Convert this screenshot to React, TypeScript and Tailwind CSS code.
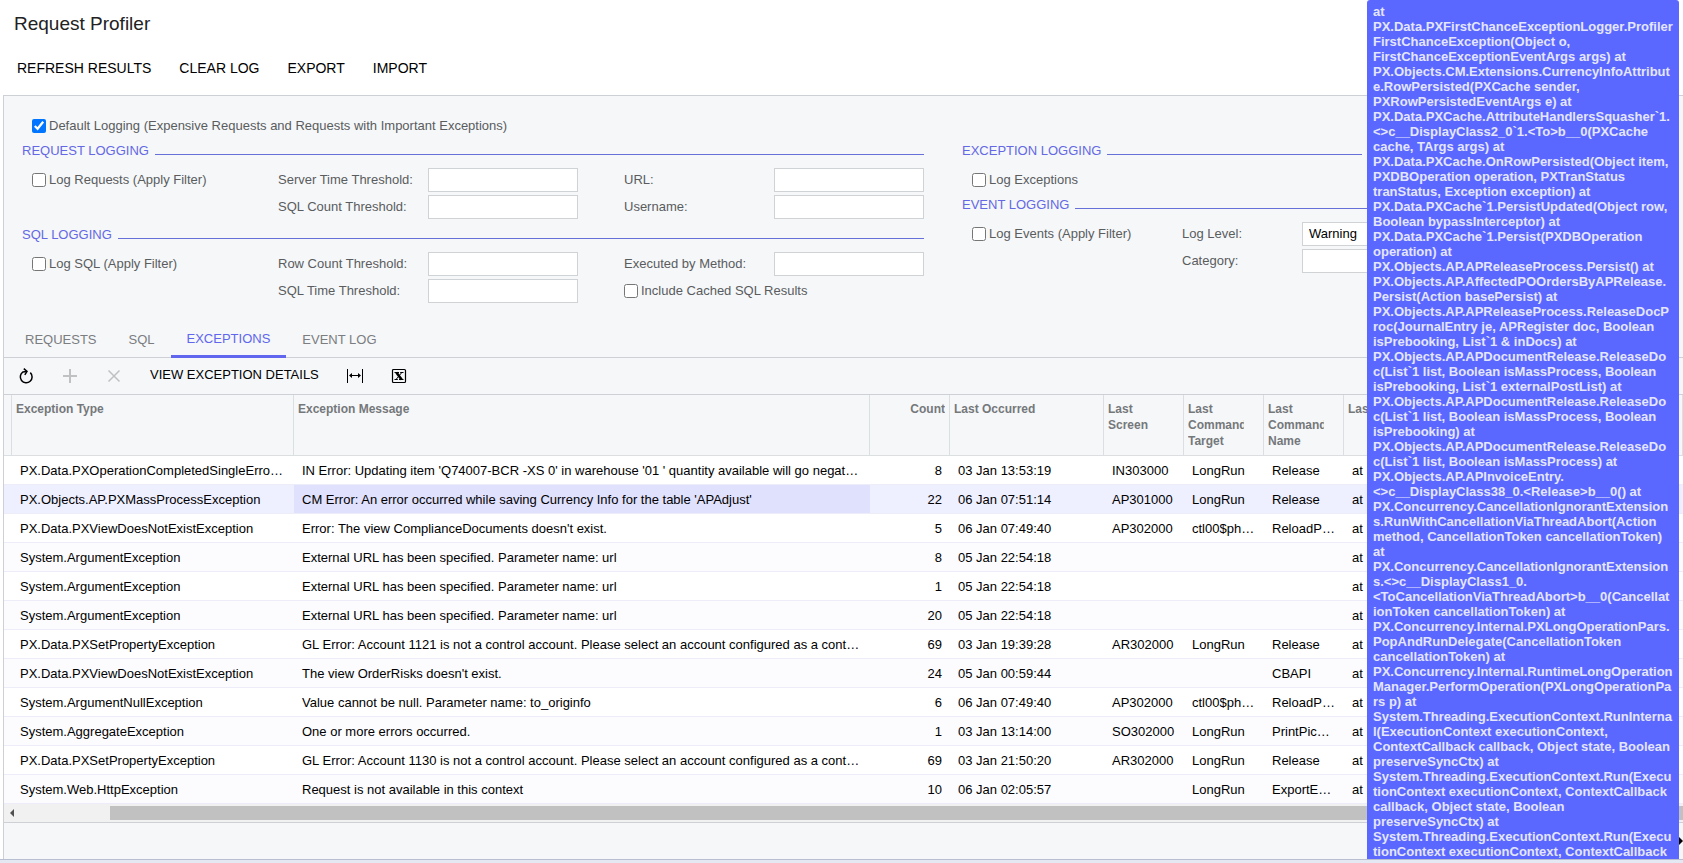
import { useState } from "react";
import type { ReactNode } from "react";

interface ExceptionRow {
  type: string;
  message: string;
  count: number;
  occurred: string;
  screen: string;
  target: string;
  command: string;
}

const rows: ExceptionRow[] = [
  { type: "PX.Data.PXOperationCompletedSingleErrorException", message: "IN Error: Updating item 'Q74007-BCR -XS 0' in warehouse '01 ' quantity available will go negative.", count: 8, occurred: "03 Jan 13:53:19", screen: "IN303000", target: "LongRun", command: "Release" },
  { type: "PX.Objects.AP.PXMassProcessException", message: "CM Error: An error occurred while saving Currency Info for the table 'APAdjust'", count: 22, occurred: "06 Jan 07:51:14", screen: "AP301000", target: "LongRun", command: "Release" },
  { type: "PX.Data.PXViewDoesNotExistException", message: "Error: The view ComplianceDocuments doesn't exist.", count: 5, occurred: "06 Jan 07:49:40", screen: "AP302000", target: "ctl00$phDS", command: "ReloadPage" },
  { type: "System.ArgumentException", message: "External URL has been specified. Parameter name: url", count: 8, occurred: "05 Jan 22:54:18", screen: "", target: "", command: "" },
  { type: "System.ArgumentException", message: "External URL has been specified. Parameter name: url", count: 1, occurred: "05 Jan 22:54:18", screen: "", target: "", command: "" },
  { type: "System.ArgumentException", message: "External URL has been specified. Parameter name: url", count: 20, occurred: "05 Jan 22:54:18", screen: "", target: "", command: "" },
  { type: "PX.Data.PXSetPropertyException", message: "GL Error: Account 1121 is not a control account. Please select an account configured as a control account.", count: 69, occurred: "03 Jan 19:39:28", screen: "AR302000", target: "LongRun", command: "Release" },
  { type: "PX.Data.PXViewDoesNotExistException", message: "The view OrderRisks doesn't exist.", count: 24, occurred: "05 Jan 00:59:44", screen: "", target: "", command: "CBAPI" },
  { type: "System.ArgumentNullException", message: "Value cannot be null. Parameter name: to_originfo", count: 6, occurred: "06 Jan 07:49:40", screen: "AP302000", target: "ctl00$phDS", command: "ReloadPage" },
  { type: "System.AggregateException", message: "One or more errors occurred.", count: 1, occurred: "03 Jan 13:14:00", screen: "SO302000", target: "LongRun", command: "PrintPickList" },
  { type: "PX.Data.PXSetPropertyException", message: "GL Error: Account 1130 is not a control account. Please select an account configured as a control account.", count: 69, occurred: "03 Jan 21:50:20", screen: "AR302000", target: "LongRun", command: "Release" },
  { type: "System.Web.HttpException", message: "Request is not available in this context", count: 10, occurred: "06 Jan 02:05:57", screen: "", target: "LongRun", command: "ExportExcel" },
];

// Already wrapped to the tooltip width
const stackTrace = [
  "at",
  "PX.Data.PXFirstChanceExceptionLogger.Profiler",
  "FirstChanceException(Object o,",
  "FirstChanceExceptionEventArgs args) at",
  "PX.Objects.CM.Extensions.CurrencyInfoAttribut",
  "e.RowPersisted(PXCache sender,",
  "PXRowPersistedEventArgs e) at",
  "PX.Data.PXCache.AttributeHandlersSquasher`1.",
  "<>c__DisplayClass2_0`1.<To>b__0(PXCache",
  "cache, TArgs args) at",
  "PX.Data.PXCache.OnRowPersisted(Object item,",
  "PXDBOperation operation, PXTranStatus",
  "tranStatus, Exception exception) at",
  "PX.Data.PXCache`1.PersistUpdated(Object row,",
  "Boolean bypassInterceptor) at",
  "PX.Data.PXCache`1.Persist(PXDBOperation",
  "operation) at",
  "PX.Objects.AP.APReleaseProcess.Persist() at",
  "PX.Objects.AP.AffectedPOOrdersByAPRelease.",
  "Persist(Action basePersist) at",
  "PX.Objects.AP.APReleaseProcess.ReleaseDocP",
  "roc(JournalEntry je, APRegister doc, Boolean",
  "isPrebooking, List`1 & inDocs) at",
  "PX.Objects.AP.APDocumentRelease.ReleaseDo",
  "c(List`1 list, Boolean isMassProcess, Boolean",
  "isPrebooking, List`1 externalPostList) at",
  "PX.Objects.AP.APDocumentRelease.ReleaseDo",
  "c(List`1 list, Boolean isMassProcess, Boolean",
  "isPrebooking) at",
  "PX.Objects.AP.APDocumentRelease.ReleaseDo",
  "c(List`1 list, Boolean isMassProcess) at",
  "PX.Objects.AP.APInvoiceEntry.",
  "<>c__DisplayClass38_0.<Release>b__0() at",
  "PX.Concurrency.CancellationIgnorantExtension",
  "s.RunWithCancellationViaThreadAbort(Action",
  "method, CancellationToken cancellationToken)",
  "at",
  "PX.Concurrency.CancellationIgnorantExtension",
  "s.<>c__DisplayClass1_0.",
  "<ToCancellationViaThreadAbort>b__0(Cancellat",
  "ionToken cancellationToken) at",
  "PX.Concurrency.Internal.PXLongOperationPars.",
  "PopAndRunDelegate(CancellationToken",
  "cancellationToken) at",
  "PX.Concurrency.Internal.RuntimeLongOperation",
  "Manager.PerformOperation(PXLongOperationPa",
  "rs p) at",
  "System.Threading.ExecutionContext.RunInterna",
  "l(ExecutionContext executionContext,",
  "ContextCallback callback, Object state, Boolean",
  "preserveSyncCtx) at",
  "System.Threading.ExecutionContext.Run(Execu",
  "tionContext executionContext, ContextCallback",
  "callback, Object state, Boolean",
  "preserveSyncCtx) at",
  "System.Threading.ExecutionContext.Run(Execu",
  "tionContext executionContext, ContextCallback",
];

const Legend = ({ children }: { children: ReactNode }) => (
  <div className="flex h-[27px] items-center gap-[6px] text-[#6468e4]">
    <h2 className="pb-[2px]">{children}</h2>
    <span className="mt-[6px] h-px flex-1 bg-[#6670d8]" />
  </div>
);

const CheckField = ({ label, defaultChecked = false }: { label: string; defaultChecked?: boolean }) => (
  <label className="flex h-6 items-center gap-[3px] whitespace-nowrap">
    <input type="checkbox" defaultChecked={defaultChecked} className="size-[14px] accent-[#0075ff]" />
    {label}
  </label>
);

const TextField = ({ label, id, labelClass }: { label: string; id: string; labelClass: string }) => (
  <div className="flex h-6 items-center">
    <label htmlFor={id} className={`shrink-0 ${labelClass}`}>{label}</label>
    <input id={id} type="text" className="h-6 w-[150px] border border-[#d0d3d6] bg-white px-[7px] text-black" />
  </div>
);

const HeaderCell = ({ children, right = false }: { children?: ReactNode; right?: boolean }) => (
  <th className={`h-[61px] overflow-hidden border-r border-b border-[#dcdfe2] pt-[6px] pl-1 align-top leading-4 font-bold ${right ? "pr-1 text-right" : "pr-[19px] text-left"}`}>
    <div className="overflow-hidden">{children}</div>
  </th>
);

const Cell = ({ children, className = "pr-2" }: { children?: ReactNode; className?: string }) => (
  <td className={`h-[29px] truncate border-b border-[#ededf9] pt-[2px] pl-2 ${className}`}>{children}</td>
);

const tabs = ["REQUESTS", "SQL", "EXCEPTIONS", "EVENT LOG"];

const App = () => {
  const [activeTab, setActiveTab] = useState("EXCEPTIONS");
  const [selected, setSelected] = useState(1);

  return (
    <div className="relative flex min-h-screen flex-col overflow-hidden bg-white font-['Liberation_Sans',Arial,sans-serif] text-[13px] leading-4 text-[#5a5c5e]">
      <header className="h-[95px] pt-3">
        <h1 className="px-[14px] text-[19px] leading-6 text-[#222]">Request Profiler</h1>
        <nav className="mt-[22px] flex px-[3px] text-[14px] leading-5 text-black">
          {["REFRESH RESULTS", "CLEAR LOG", "EXPORT", "IMPORT"].map((label) => (
            <button key={label} className="px-[14px]">{label}</button>
          ))}
        </nav>
      </header>

      <main className="ml-[3px] flex flex-1 flex-col border-t border-l border-[#cdd0d4] bg-[#f5f7f9]">
        {/* Logging settings */}
        <form className="px-[18px] pt-[18px]">
          <div className="pl-[10px]">
            <CheckField label="Default Logging (Expensive Requests and Requests with Important Exceptions)" defaultChecked />
          </div>
          <div className="flex gap-[38px]">
            <div className="w-[902px] shrink-0">
              <Legend>REQUEST LOGGING</Legend>
              <div className="mt-[3px] mb-[3px] flex justify-between pl-[10px]">
                <div className="w-[246px]">
                  <CheckField label="Log Requests (Apply Filter)" />
                </div>
                <div className="flex flex-1 flex-col gap-[3px]">
                  <TextField label="Server Time Threshold:" id="server-time" labelClass="w-[150px]" />
                  <TextField label="SQL Count Threshold:" id="sql-count" labelClass="w-[150px]" />
                </div>
                <div className="flex flex-col gap-[3px]">
                  <TextField label="URL:" id="url" labelClass="w-[150px]" />
                  <TextField label="Username:" id="username" labelClass="w-[150px]" />
                </div>
              </div>
              <Legend>SQL LOGGING</Legend>
              <div className="mt-[3px] flex justify-between pl-[10px]">
                <div className="w-[246px]">
                  <CheckField label="Log SQL (Apply Filter)" />
                </div>
                <div className="flex flex-1 flex-col gap-[3px]">
                  <TextField label="Row Count Threshold:" id="row-count" labelClass="w-[150px]" />
                  <TextField label="SQL Time Threshold:" id="sql-time" labelClass="w-[150px]" />
                </div>
                <div className="flex flex-col gap-[3px]">
                  <TextField label="Executed by Method:" id="method" labelClass="w-[150px]" />
                  <CheckField label="Include Cached SQL Results" />
                </div>
              </div>
            </div>

            <div className="w-[490px] shrink-0">
              <div className="w-[400px]">
                <Legend>EXCEPTION LOGGING</Legend>
              </div>
              <div className="mt-[3px] pl-[10px]">
                <CheckField label="Log Exceptions" />
              </div>
              <Legend>EVENT LOGGING</Legend>
              <div className="mt-[3px] flex justify-between pl-[10px]">
                <CheckField label="Log Events (Apply Filter)" />
                <div className="flex flex-col gap-[3px]">
                  <div className="flex h-6 items-center">
                    <label htmlFor="log-level" className="w-[120px]">Log Level:</label>
                    <select id="log-level" className="h-6 w-[150px] appearance-none border border-[#d0d3d6] bg-white px-[6px] text-black">
                      <option>Warning</option>
                    </select>
                  </div>
                  <TextField label="Category:" id="category" labelClass="w-[120px]" />
                </div>
              </div>
            </div>
          </div>
        </form>

        {/* Tabs */}
        <div className="mt-[17px] flex h-[38px] border-b border-[#cdd0d4] pl-[5px]">
          {tabs.map((tab) => (
            <button
              key={tab}
              onClick={() => setActiveTab(tab)}
              className={`h-[38px] px-4 pt-[2px] ${
                tab === activeTab ? "border-b-[3px] border-[#6066ee] text-[#6066ee]" : "text-[#7b7d80]"
              }`}
            >
              {tab}
            </button>
          ))}
        </div>

        {/* Grid toolbar */}
        <div className="flex h-[37px] items-center border-b border-[#cdd0d4] pl-[14px] text-black">
          <button aria-label="Refresh">
            <svg width="16" height="16" viewBox="0 0 16 16" fill="none" stroke="currentColor" strokeWidth="1.5">
              <path d="M12.3 4.6A5.9 5.9 0 1 1 5 3.9L8.4 3.5" />
              <path d="M5.8 0.6L9 3.4L6.8 6.8" />
            </svg>
          </button>
          <button aria-label="Add" className="ml-7 text-[#bfc1c3]">
            <svg width="16" height="16" viewBox="0 0 16 16" fill="none" stroke="currentColor" strokeWidth="2">
              <path d="M8 1V15M1 8H15" />
            </svg>
          </button>
          <button aria-label="Delete" className="ml-7 text-[#bfc1c3]">
            <svg width="16" height="16" viewBox="0 0 16 16" fill="none" stroke="currentColor" strokeWidth="1.5">
              <path d="M2.5 2.5L13.5 13.5M13.5 2.5L2.5 13.5" />
            </svg>
          </button>
          <button className="ml-7 pb-[2px]">VIEW EXCEPTION DETAILS</button>
          <button aria-label="Fit to screen" className="ml-7">
            <svg width="16" height="16" viewBox="0 0 16 16" fill="none" stroke="currentColor">
              <path d="M0.5 1V15M15.5 1V15M3 7.5H13" />
              <path d="M2 7.5L5 5V10ZM14 7.5L11 5V10Z" fill="currentColor" stroke="none" />
            </svg>
          </button>
          <button aria-label="Export to Excel" className="ml-7">
            <svg width="16" height="16" viewBox="0 0 16 16" fill="none" stroke="currentColor">
              <rect x="1.5" y="1.5" width="13" height="13" rx="1" strokeWidth="1.2" />
              <path d="M5.4 4.5L10.6 11.5" strokeWidth="2.6" />
              <path d="M10.8 4.5L5 11.5M3.5 4.5H8M9.2 4.5H12.5M3.5 11.5H6.8M8 11.5H12.5" />
            </svg>
          </button>
        </div>

        {/* Exceptions grid */}
        <table className="w-full table-fixed border-separate border-spacing-0">
          <colgroup>
            <col className="w-[8px]" />
            <col className="w-[282px]" />
            <col className="w-[576px]" />
            <col className="w-[80px]" />
            <col className="w-[154px]" />
            <col className="w-[80px]" />
            <col className="w-[80px]" />
            <col className="w-[80px]" />
            <col />
          </colgroup>
          <thead className="text-[12px] text-[#75787b]">
            <tr>
              <th className="border-r border-b border-[#dcdfe2]" />
              <HeaderCell>Exception Type</HeaderCell>
              <HeaderCell>Exception Message</HeaderCell>
              <HeaderCell right>Count</HeaderCell>
              <HeaderCell>Last Occurred</HeaderCell>
              <HeaderCell>Last Screen</HeaderCell>
              <HeaderCell>Last Command Target</HeaderCell>
              <HeaderCell>Last Command Name</HeaderCell>
              <HeaderCell>Last Stack Trace</HeaderCell>
            </tr>
          </thead>
          <tbody className="text-black">
            {rows.map((row, index) => (
              <tr
                key={index}
                onClick={() => setSelected(index)}
                className={index === selected ? "bg-[#eeefff]" : index % 2 ? "bg-[#fcfcff]" : "bg-white"}
              >
                <td className="border-b border-[#ededf9]" />
                <Cell>{row.type}</Cell>
                <Cell className={index === selected ? "bg-[#e0e1fd] pr-[10px]" : "pr-[10px]"}>{row.message}</Cell>
                <Cell className="pr-2 text-right">{row.count}</Cell>
                <Cell>{row.occurred}</Cell>
                <Cell>{row.screen}</Cell>
                <Cell>{row.target}</Cell>
                <Cell>{row.command}</Cell>
                <Cell>at</Cell>
              </tr>
            ))}
          </tbody>
        </table>

        {/* Horizontal scroll bar */}
        <div className="flex h-[19px] items-center border-b border-[#cdd0d4] bg-[#f1f1f1]">
          <svg width="16" height="16" viewBox="0 0 16 16" fill="#505050">
            <path d="M10 4V12L6 8Z" />
          </svg>
          <div className="ml-[90px] h-[14px] flex-1 bg-[#c1c1c1]" />
        </div>

        <div className="flex min-h-[36px] flex-1 items-center justify-end">
          <svg width="4" height="8" viewBox="0 0 4 8" fill="#000">
            <path d="M0 0L4 4L0 8Z" />
          </svg>
        </div>
      </main>

      <footer className="h-1 border-t border-[#b9bfd0] bg-[#e3e8f3]" />

      {/* Stack trace tooltip */}
      <div
        role="tooltip"
        className="absolute top-0 right-1 bottom-1 w-[312px] overflow-hidden rounded-t-[3px] bg-[#5b68ff] pt-1 pl-[6px] text-[13px] leading-[15px] font-bold whitespace-pre text-[#e4e6ff]"
      >
        {stackTrace.join("\n")}
      </div>
    </div>
  );
};

export default App;
